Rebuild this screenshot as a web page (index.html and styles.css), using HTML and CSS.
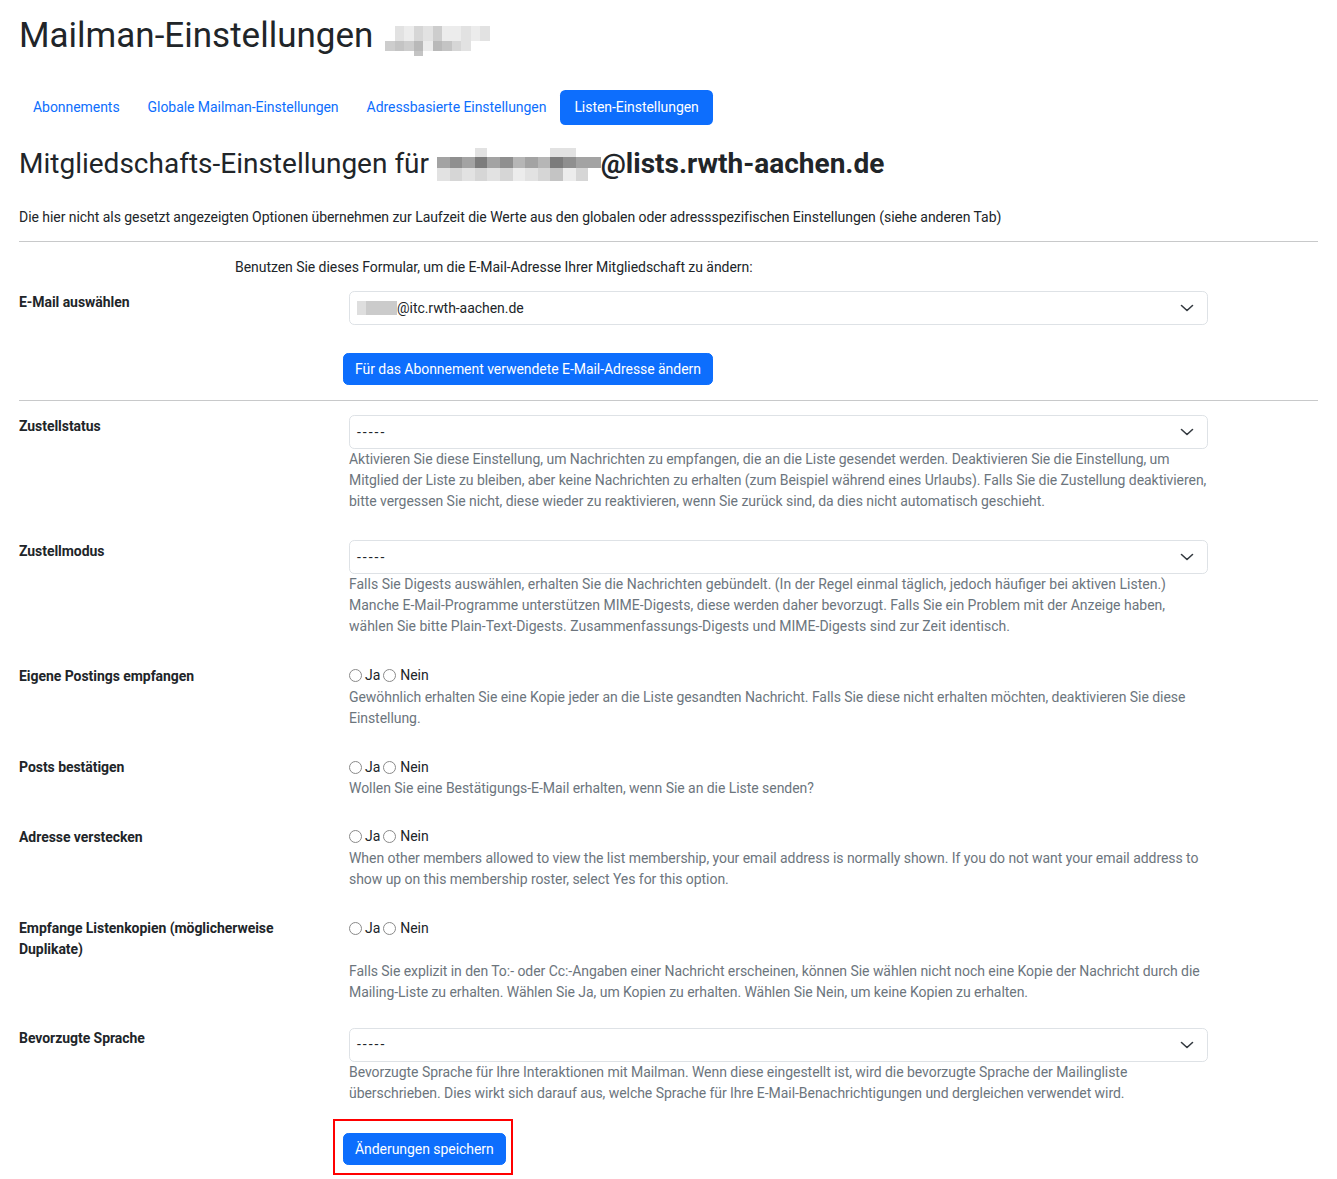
FILE: index.html
```html
<!DOCTYPE html>
<html lang="de">
<head>
<meta charset="utf-8">
<title>Mailman-Einstellungen</title>
<link rel="stylesheet" href="styles.css">
</head>
<body>
<div class="page">
  <h1 class="title">Mailman-Einstellungen
    <span class="mosaic mosaic-title" aria-hidden="true">
      <span class="s0"></span><span class="s2"></span><span class="s1"></span><span class="s3"></span><span class="s2"></span><span class="s4"></span><span class="s1"></span><span class="s1"></span><span class="s2"></span><span class="s1"></span><span class="s2"></span>
      <span class="s4"></span><span class="s5"></span><span class="s4"></span><span class="s6"></span><span class="s1"></span><span class="s6"></span><span class="s5"></span><span class="s3"></span><span class="s2"></span><span class="s0"></span><span class="s0"></span>
      <span class="s0"></span><span class="s0"></span><span class="s0"></span><span class="s5"></span><span class="s0"></span><span class="s0"></span><span class="s0"></span><span class="s0"></span><span class="s0"></span><span class="s0"></span><span class="s0"></span>
    </span>
  </h1>

  <ul class="pills">
    <li><a class="pill" href="#">Abonnements</a></li>
    <li><a class="pill" href="#">Globale Mailman-Einstellungen</a></li>
    <li><a class="pill" href="#">Adressbasierte Einstellungen</a></li>
    <li><a class="pill active" href="#">Listen-Einstellungen</a></li>
  </ul>

  <h2 class="subtitle">Mitgliedschafts-Einstellungen für
    <span class="mosaic mosaic-sub" aria-hidden="true">
      <span class="s0"></span><span class="s0"></span><span class="s0"></span><span class="s2"></span><span class="s0"></span><span class="s0"></span><span class="s0"></span><span class="s0"></span><span class="s0"></span><span class="s2"></span><span class="s2"></span><span class="s0"></span><span class="s0"></span>
      <span class="d3"></span><span class="d2"></span><span class="d3"></span><span class="d1"></span><span class="d3"></span><span class="d2"></span><span class="d4"></span><span class="d3"></span><span class="d4"></span><span class="d1"></span><span class="d2"></span><span class="d3"></span><span class="d3"></span>
      <span class="s2"></span><span class="s3"></span><span class="s2"></span><span class="s3"></span><span class="s2"></span><span class="s3"></span><span class="s1"></span><span class="s2"></span><span class="s3"></span><span class="s5"></span><span class="s1"></span><span class="s3"></span><span class="s0"></span>
    </span>
    <b class="list-domain">@lists.rwth-aachen.de</b>
  </h2>

  <p class="intro">Die hier nicht als gesetzt angezeigten Optionen übernehmen zur Laufzeit die Werte aus den globalen oder adressspezifischen Einstellungen (siehe anderen Tab)</p>

  <hr class="rule">

  <p class="hint">Benutzen Sie dieses Formular, um die E-Mail-Adresse Ihrer Mitgliedschaft zu ändern:</p>

  <div class="field field-email">
    <div class="field-label">E-Mail auswählen</div>
    <div class="select">
      <span class="select-value"><span class="email-blur" aria-hidden="true"></span>@itc.rwth-aachen.de</span>
      <svg class="chevron" width="14" height="8" viewBox="0 0 14 8"><polyline points="1.5,1.5 7,6.5 12.5,1.5" fill="none" stroke="#343a40" stroke-width="1.6" stroke-linecap="round" stroke-linejoin="round"/></svg>
    </div>
  </div>

  <div class="action">
    <button class="btn" type="button">Für das Abonnement verwendete E-Mail-Adresse ändern</button>
  </div>

  <hr class="rule">

  <div class="field">
    <div class="field-label">Zustellstatus</div>
    <div class="select">
      <span class="select-value dashes">-----</span>
      <svg class="chevron" width="14" height="8" viewBox="0 0 14 8"><polyline points="1.5,1.5 7,6.5 12.5,1.5" fill="none" stroke="#343a40" stroke-width="1.6" stroke-linecap="round" stroke-linejoin="round"/></svg>
    </div>
    <div class="help">Aktivieren Sie diese Einstellung, um Nachrichten zu empfangen, die an die Liste gesendet werden. Deaktivieren Sie die Einstellung, um Mitglied der Liste zu bleiben, aber keine Nachrichten zu erhalten (zum Beispiel während eines Urlaubs). Falls Sie die Zustellung deaktivieren, bitte vergessen Sie nicht, diese wieder zu reaktivieren, wenn Sie zurück sind, da dies nicht automatisch geschieht.</div>
  </div>

  <div class="field">
    <div class="field-label">Zustellmodus</div>
    <div class="select">
      <span class="select-value dashes">-----</span>
      <svg class="chevron" width="14" height="8" viewBox="0 0 14 8"><polyline points="1.5,1.5 7,6.5 12.5,1.5" fill="none" stroke="#343a40" stroke-width="1.6" stroke-linecap="round" stroke-linejoin="round"/></svg>
    </div>
    <div class="help help-loose">Falls Sie Digests auswählen, erhalten Sie die Nachrichten gebündelt. (In der Regel einmal täglich, jedoch häufiger bei aktiven Listen.) Manche E-Mail-Programme unterstützen MIME-Digests, diese werden daher bevorzugt. Falls Sie ein Problem mit der Anzeige haben, wählen Sie bitte Plain-Text-Digests. Zusammenfassungs-Digests und MIME-Digests sind zur Zeit identisch.</div>
  </div>

  <div class="field">
    <div class="field-label">Eigene Postings empfangen</div>
    <div class="radios">
      <label class="radio"><span class="radio-dot"></span>Ja</label>
      <label class="radio"><span class="radio-dot"></span>Nein</label>
    </div>
    <div class="help">Gewöhnlich erhalten Sie eine Kopie jeder an die Liste gesandten Nachricht. Falls Sie diese nicht erhalten möchten, deaktivieren Sie diese Einstellung.</div>
  </div>

  <div class="field field-short">
    <div class="field-label">Posts bestätigen</div>
    <div class="radios">
      <label class="radio"><span class="radio-dot"></span>Ja</label>
      <label class="radio"><span class="radio-dot"></span>Nein</label>
    </div>
    <div class="help">Wollen Sie eine Bestätigungs-E-Mail erhalten, wenn Sie an die Liste senden?</div>
  </div>

  <div class="field">
    <div class="field-label">Adresse verstecken</div>
    <div class="radios">
      <label class="radio"><span class="radio-dot"></span>Ja</label>
      <label class="radio"><span class="radio-dot"></span>Nein</label>
    </div>
    <div class="help">When other members allowed to view the list membership, your email address is normally shown. If you do not want your email address to show up on this membership roster, select Yes for this option.</div>
  </div>

  <div class="field field-multi">
    <div class="field-label">Empfange Listenkopien (möglicherweise Duplikate)</div>
    <div class="radios">
      <label class="radio"><span class="radio-dot"></span>Ja</label>
      <label class="radio"><span class="radio-dot"></span>Nein</label>
    </div>
    <div class="help">Falls Sie explizit in den To:- oder Cc:-Angaben einer Nachricht erscheinen, können Sie wählen nicht noch eine Kopie der Nachricht durch die Mailing-Liste zu erhalten. Wählen Sie Ja, um Kopien zu erhalten. Wählen Sie Nein, um keine Kopien zu erhalten.</div>
  </div>

  <div class="field field-last">
    <div class="field-label">Bevorzugte Sprache</div>
    <div class="select">
      <span class="select-value dashes">-----</span>
      <svg class="chevron" width="14" height="8" viewBox="0 0 14 8"><polyline points="1.5,1.5 7,6.5 12.5,1.5" fill="none" stroke="#343a40" stroke-width="1.6" stroke-linecap="round" stroke-linejoin="round"/></svg>
    </div>
    <div class="help">Bevorzugte Sprache für Ihre Interaktionen mit Mailman. Wenn diese eingestellt ist, wird die bevorzugte Sprache der Mailingliste überschrieben. Dies wirkt sich darauf aus, welche Sprache für Ihre E-Mail-Benachrichtigungen und dergleichen verwendet wird.</div>
  </div>

  <div class="highlight">
    <button class="btn" type="submit">Änderungen speichern</button>
  </div>
</div>
</body>
</html>
```

FILE: styles.css
```css
* { box-sizing: border-box; }

body {
  margin: 0;
  font-family: Roboto, "Liberation Sans", Arial, sans-serif;
  font-size: 14px;
  line-height: 1.5;
  letter-spacing: -0.05px;
  color: #212529;
  background: #fff;
}

.page {
  padding: 15px 19px 4px;
}

/* headings */
.title {
  display: flex;
  align-items: flex-start;
  margin: 0;
  font-size: 35px;
  line-height: 42px;
  font-weight: 400;
  letter-spacing: 0;
}

.mosaic { display: grid; }
.mosaic span { display: block; }

.mosaic-title {
  margin: 11px 0 0 12px;
  grid-template-columns: repeat(11, 9.5px);
  grid-template-rows: 15px 10px 5px;
}

.subtitle {
  display: flex;
  align-items: flex-start;
  margin: 21.6px 0 0;
  font-size: 28px;
  line-height: 33.6px;
  font-weight: 400;
  letter-spacing: 0;
}

.mosaic-sub {
  margin: 1.4px 0 0 8px;
  grid-template-columns: repeat(13, 12.6px);
  grid-template-rows: 9px 11px 13px;
}

.list-domain { font-weight: 700; }

.s0 { background: transparent; }
.s1 { background: #ececec; }
.s2 { background: #e2e2e2; }
.s3 { background: #d6d6d6; }
.s4 { background: #cdcdcd; }
.s5 { background: #c4c4c4; }
.s6 { background: #b9b9b9; }
.d1 { background: #7c7c7c; }
.d2 { background: #8f8f8f; }
.d3 { background: #a3a3a3; }
.d4 { background: #b6b6b6; }

/* nav pills */
.pills {
  display: flex;
  list-style: none;
  margin: 33px 0 0;
  padding: 0;
}

.pill {
  display: block;
  padding: 7px 14px;
  line-height: 21px;
  color: #0d6efd;
  text-decoration: none;
  border-radius: 5.25px;
}

.pill.active {
  background: #0d6efd;
  color: #fff;
}

.intro {
  margin: 26.3px 0 13px;
}

.rule {
  margin: 0 0 14px;
  border: 0;
  border-top: 1px solid #c8c9ca;
  height: 0;
}

.hint {
  margin: 15px 0 13px 216px;
}

/* form rows */
.field {
  display: grid;
  grid-template-columns: 306px 859px;
  column-gap: 24px;
  align-items: start;
  margin-bottom: 28px;
}

.field-short { margin-bottom: 27px; }
.field-multi { margin-bottom: 24.5px; }
.field-multi .help { margin-top: 1px; }
.field-last { margin-bottom: 15px; }

.field-label {
  grid-column: 1;
  grid-row: 1;
  font-weight: 700;
  line-height: 21px;
  padding-top: 0.5px;
}

.select,
.radios {
  grid-column: 2;
  grid-row: 1;
}

.help {
  grid-column: 2;
  grid-row: 2;
  color: #6c757d;
  line-height: 21px;
}

.help-loose { letter-spacing: 0; }

.select {
  display: flex;
  align-items: center;
  justify-content: space-between;
  height: 34px;
  padding: 0 13px 0 7px;
  border: 1px solid #dee2e6;
  border-radius: 5.25px;
  background: #fff;
  line-height: 21px;
}

.select-value {
  display: flex;
  align-items: center;
}

.dashes { letter-spacing: 2px; }

.email-blur {
  display: block;
  width: 40px;
  height: 14px;
  background: linear-gradient(to right, #dedede 0 9px, #cbcbcb 9px 100%);
}

.chevron { display: block; flex: none; }

.radios {
  display: flex;
  align-items: center;
  line-height: 21px;
}

.radio {
  display: flex;
  align-items: center;
  margin-right: 3px;
}

.radio-dot {
  display: block;
  width: 13px;
  height: 13px;
  margin-right: 3px;
  border: 1px solid #8a8a8a;
  border-radius: 50%;
  background: #fff;
}

.radio + .radio .radio-dot { margin-right: 4px; }

/* buttons */
.action {
  margin: 0 0 15px 324px;
}

.btn {
  display: inline-block;
  padding: 5px 11px;
  font-family: inherit;
  font-size: 14px;
  line-height: 20px;
  letter-spacing: -0.05px;
  color: #fff;
  background: #0d6efd;
  border: 1px solid #0d6efd;
  border-radius: 5.25px;
  cursor: pointer;
}

.highlight {
  display: inline-block;
  margin-left: 314px;
  padding: 12px 5px 8px 8px;
  border: 2px solid #ff0000;
}

.highlight .btn { display: block; }
```
